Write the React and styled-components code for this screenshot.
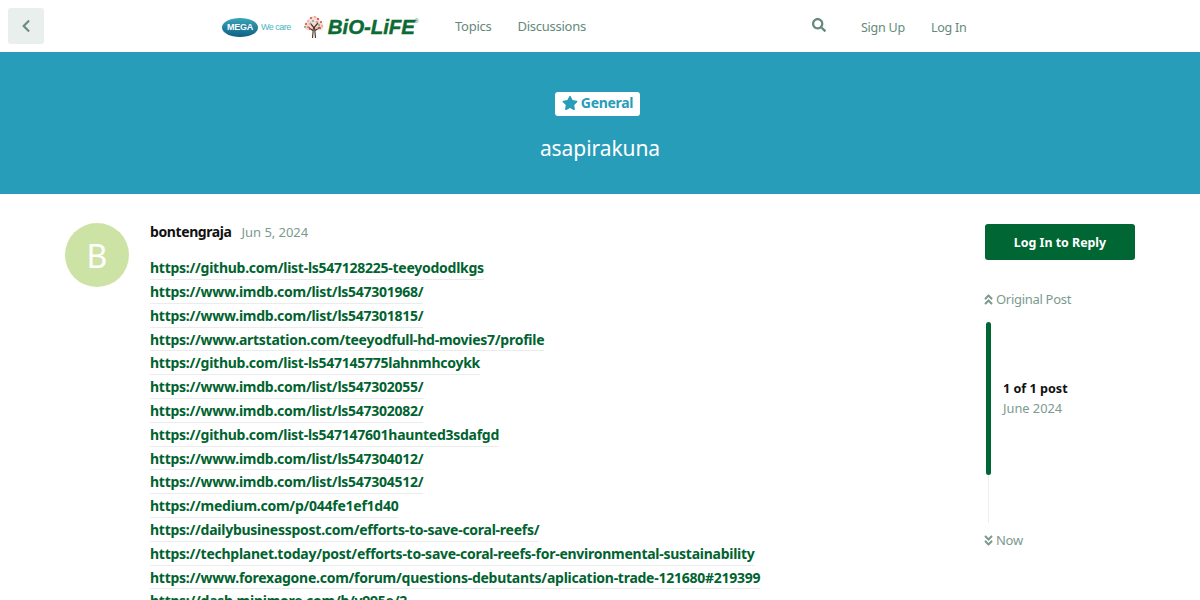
import React from "react";
import styled, { createGlobalStyle } from "styled-components";
import { FaStar, FaSearch, FaAngleDoubleUp, FaAngleDoubleDown, FaChevronLeft } from "react-icons/fa";

const GlobalStyle = createGlobalStyle`
  html, body {
    margin: 0;
    height: 600px;
    overflow: hidden;
    background: #fff;
    font-family: "Noto Sans", sans-serif;
  }
  * { box-sizing: border-box; }
`;

const Header = styled.header`
  height: 52px;
  display: flex;
  align-items: center;
  padding-left: 8px;
`;
const BackButton = styled.button`
  width: 36px;
  height: 36px;
  border: none;
  border-radius: 3px;
  background: #e8efec;
  color: #6a8f80;
  display: flex;
  align-items: center;
  justify-content: center;
  padding: 0;
  font-size: 14px;
`;
const LogoLink = styled.a`
  margin-left: 178px;
  width: 198px;
  height: 24px;
  display: flex;
  align-items: center;
  margin-top: 2px;
`;
const MegaPill = styled.span`
  width: 36px;
  height: 19px;
  flex: none;
  border-radius: 50%;
  background: linear-gradient(180deg, #3aa6b8 0%, #0f5f86 100%);
  color: #fff;
  font: bold 9px "Liberation Sans", sans-serif;
  letter-spacing: -0.2px;
  display: flex;
  align-items: center;
  justify-content: center;
`;
const WeCare = styled.span`
  margin-left: 3px;
  font: 9px "Liberation Sans", sans-serif;
  letter-spacing: -0.5px;
  color: #4cb6c0;
  white-space: nowrap;
`;
const BioLife = styled.span`
  margin-left: 3px;
  font: italic bold 20.5px "Liberation Sans", sans-serif;
  letter-spacing: -0.1px;
  -webkit-text-stroke: 0.4px #0c6a33;
  color: #0c6a33;
  white-space: nowrap;
`;
const Registered = styled.sup`
  font: 5px "Liberation Sans", sans-serif;
  color: #0c6a33;
  vertical-align: 11px;
  -webkit-text-stroke: 0;
`;
const Nav = styled.nav`
  display: flex;
  gap: 26px;
  margin-left: 35px;
  margin-top: -1px;
`;
const NavLink = styled.a`
  font-size: 13px;
  letter-spacing: -0.26px;
  color: #64897a;
`;
const HeaderRight = styled.div`
  display: flex;
  align-items: center;
  margin-left: 226px;
  color: #64897a;
`;
const SearchIcon = styled(FaSearch)`
  font-size: 14px;
  margin-right: 35px;
  margin-top: -3px;
`;
const AuthLinks = styled.div`
  display: flex;
  gap: 26px;
  margin-top: 2px;
`;
const AuthLink = styled(NavLink)`
  font-size: 12.5px;
  letter-spacing: -0.22px;
`;
const Banner = styled.section`
  height: 142px;
  background: #289db9;
  display: flex;
  flex-direction: column;
  align-items: center;
  padding-top: 40px;
`;
const CategoryBadge = styled.a`
  height: 24px;
  width: 85px;
  margin-right: 5px;
  padding-bottom: 3px;
  border-radius: 3px;
  background: #fff;
  color: #289db9;
  font-size: 14px;
  font-weight: 700;
  display: flex;
  align-items: center;
  justify-content: center;
  gap: 3px;
  letter-spacing: -0.3px;
  svg {
    font-size: 16px;
    margin-top: 1px;
  }
`;
const Title = styled.h1`
  margin: 18px 0 0;
  font-size: 21px;
  line-height: 28px;
  font-weight: 400;
  color: #fff;
  letter-spacing: -0.07px;
`;
const Main = styled.main`
  display: flex;
  padding: 29px 0 0 65px;
`;
const Avatar = styled.div`
  width: 64px;
  height: 64px;
  flex: none;
  border-radius: 50%;
  background: #cde3a5;
  color: #fff;
  font-size: 32px;
  display: flex;
  align-items: center;
  justify-content: center;
`;
const Post = styled.article`
  width: 835px;
  flex: none;
  margin-left: 21px;
`;
const PostMeta = styled.div`
  display: flex;
  align-items: baseline;
  gap: 10px;
  height: 19px;
  line-height: 17px;
`;
const Username = styled.span`
  font-size: 14px;
  font-weight: 700;
  color: #111;
  letter-spacing: -0.4px;
`;
const PostDate = styled.span`
  font-size: 13px;
  letter-spacing: -0.05px;
  color: #7c9a8e;
`;
const LinkList = styled.div`
  margin-top: 14.3px;
  font-size: 14px;
`;
const PostLink = styled.a`
  display: block;
  width: fit-content;
  font-weight: 700;
  color: #00632f;
  letter-spacing: -0.26px;
  border-bottom: 1px solid #e9eeec;
  height: 23.8px;
  line-height: 23px;
`;
const Sidebar = styled.aside`
  width: 150px;
  flex: none;
`;
const ReplyButton = styled.button`
  width: 150px;
  height: 36px;
  margin-top: 1px;
  border: none;
  border-radius: 3px;
  background: #006633;
  color: #fff;
  font: 700 12.4px "Noto Sans", sans-serif;
  padding: 0;
`;
const TimelineJump = styled.div`
  display: flex;
  align-items: center;
  gap: 1px;
  height: 18px;
  font-size: 13px;
  letter-spacing: -0.3px;
  color: #7c9a8e;
  margin-top: ${(props) => props.$top}px;
  margin-left: -3px;
`;
const Timeline = styled.div`
  margin-top: 14px;
  height: 201px;
  position: relative;
  border-left: 1px solid #eceff0;
  margin-left: 3px;
`;
const TimelineHandle = styled.div`
  position: absolute;
  left: -3px;
  top: 0;
  width: 5px;
  height: 153px;
  border-radius: 3px;
  background: #006633;
`;
const TimelineText = styled.div`
  margin-left: 14px;
  padding-top: 57px;
`;
const Position = styled.div`
  font-size: 12.6px;
  font-weight: 700;
  color: #111;
  line-height: 19px;
`;
const Month = styled.div`
  margin-top: 1px;
  font-size: 12.8px;
  color: #7c9a8e;
  line-height: 19px;
`;

const links = [
  "https://github.com/list-ls547128225-teeyododlkgs",
  "https://www.imdb.com/list/ls547301968/",
  "https://www.imdb.com/list/ls547301815/",
  "https://www.artstation.com/teeyodfull-hd-movies7/profile",
  "https://github.com/list-ls547145775lahnmhcoykk",
  "https://www.imdb.com/list/ls547302055/",
  "https://www.imdb.com/list/ls547302082/",
  "https://github.com/list-ls547147601haunted3sdafgd",
  "https://www.imdb.com/list/ls547304012/",
  "https://www.imdb.com/list/ls547304512/",
  "https://medium.com/p/044fe1ef1d40",
  "https://dailybusinesspost.com/efforts-to-save-coral-reefs/",
  "https://techplanet.today/post/efforts-to-save-coral-reefs-for-environmental-sustainability",
  "https://www.forexagone.com/forum/questions-debutants/aplication-trade-121680#219399",
  "https://dash.minimore.com/b/v995e/2",
];

const blossoms = [
  [8, 3, "#d9534a"], [12, 2, "#e9a9a0"], [15, 4, "#c9473f"], [5, 6, "#e9a9a0"],
  [10, 6, "#7fae74"], [14, 7, "#e08a80"], [18, 7, "#d9534a"], [3, 9, "#d9534a"],
  [7, 9, "#e9a9a0"], [16, 10, "#7fae74"], [19, 11, "#e9a9a0"], [2, 12, "#7fae74"],
  [5, 12, "#e08a80"], [17, 13, "#d9534a"], [7, 14, "#d9534a"], [14, 13, "#e9a9a0"],
];

const TreeLogo = () => (
  <svg width="22" height="24" viewBox="0 0 22 24" style={{ marginLeft: 12, flex: "none" }}>
    <circle cx="11" cy="7" r="6" fill="#f4dcd8" />
    <circle cx="6" cy="11" r="4.5" fill="#f1d8d2" />
    <circle cx="16" cy="11" r="4.5" fill="#f1d8d2" />
    <path d="M9.5 23 L10.5 12 L7 8 M12.5 23 L11.5 12 L15 8 M10.5 16 L5 12 M11.5 16 L17 12" stroke="#4d3a2c" strokeWidth="1.2" fill="none" />
    {blossoms.map(([x, y, color]) => (
      <circle key={`${x}-${y}`} cx={x} cy={y} r="1.1" fill={color} />
    ))}
  </svg>
);

const App = () => {
  return (
    <>
      <GlobalStyle />
      <Header>
        <BackButton>
          <FaChevronLeft />
        </BackButton>
        <LogoLink>
          <MegaPill>MEGA</MegaPill>
          <WeCare>We care</WeCare>
          <TreeLogo />
          <BioLife>
            BiO-LiFE<Registered>®</Registered>
          </BioLife>
        </LogoLink>
        <Nav>
          <NavLink>Topics</NavLink>
          <NavLink>Discussions</NavLink>
        </Nav>
        <HeaderRight>
          <SearchIcon />
          <AuthLinks>
            <AuthLink>Sign Up</AuthLink>
            <AuthLink>Log In</AuthLink>
          </AuthLinks>
        </HeaderRight>
      </Header>
      <Banner>
        <CategoryBadge>
          <FaStar />
          General
        </CategoryBadge>
        <Title>asapirakuna</Title>
      </Banner>
      <Main>
        <Avatar>B</Avatar>
        <Post>
          <PostMeta>
            <Username>bontengraja</Username>
            <PostDate>Jun 5, 2024</PostDate>
          </PostMeta>
          <LinkList>
            {links.map((link) => (
              <PostLink key={link}>{link}</PostLink>
            ))}
          </LinkList>
        </Post>
        <Sidebar>
          <ReplyButton>Log In to Reply</ReplyButton>
          <TimelineJump $top={30}>
            <FaAngleDoubleUp />
            Original Post
          </TimelineJump>
          <Timeline>
            <TimelineHandle />
            <TimelineText>
              <Position>1 of 1 post</Position>
              <Month>June 2024</Month>
            </TimelineText>
          </Timeline>
          <TimelineJump $top={8}>
            <FaAngleDoubleDown />
            Now
          </TimelineJump>
        </Sidebar>
      </Main>
    </>
  );
};

export default App;
